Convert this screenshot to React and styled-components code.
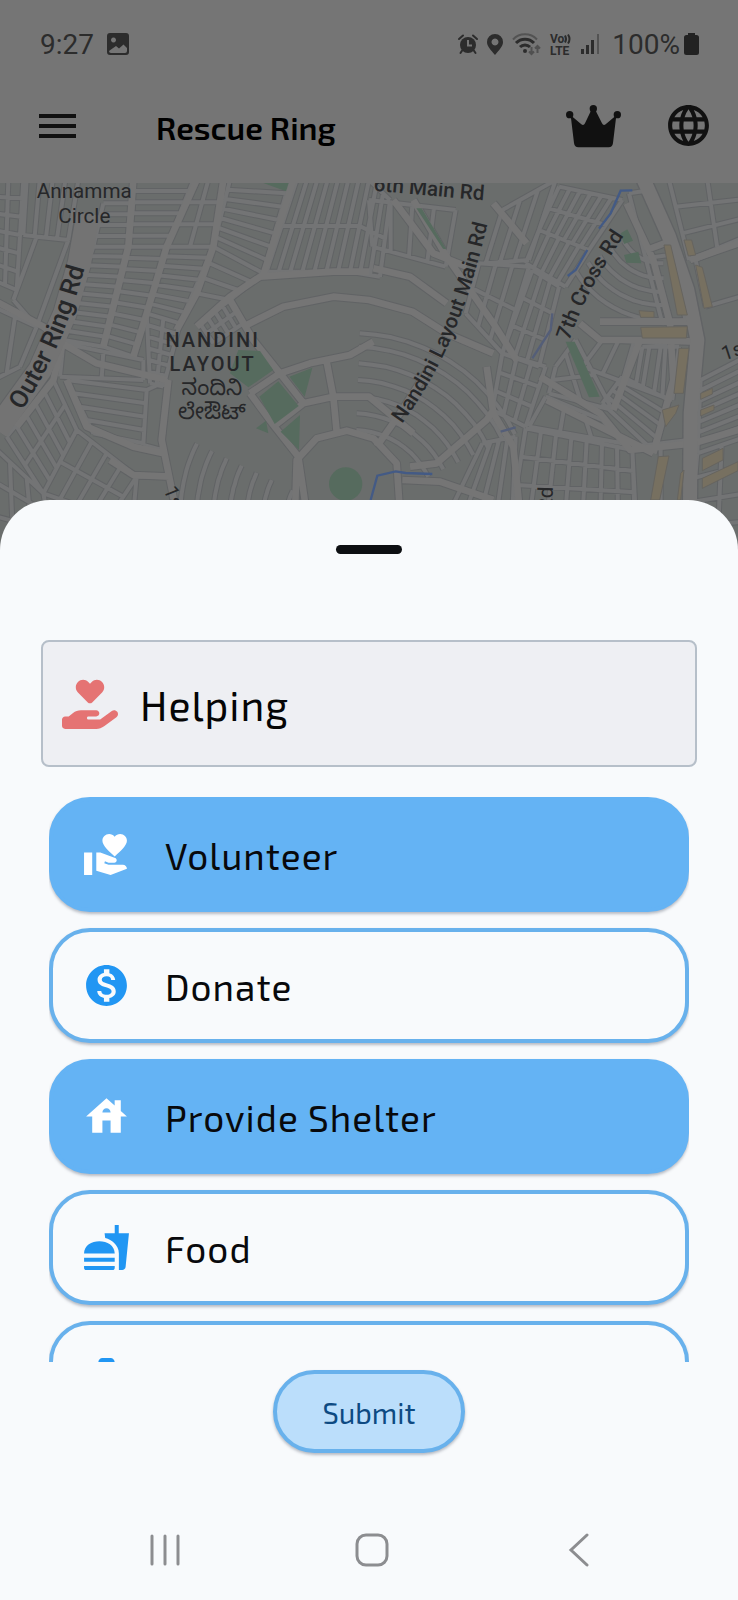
import React, { useState } from "react";
import styled, { createGlobalStyle } from "styled-components";
import {
  MdVolunteerActivism,
  MdMonetizationOn,
  MdHouse,
  MdFastfood,
  MdMedicalServices,
  MdLanguage,
} from "react-icons/md";
import { FaHandHoldingHeart } from "react-icons/fa6";

const GlobalStyle = createGlobalStyle`
  *, *::before, *::after { box-sizing: border-box; }
  body {
    margin: 0;
    background: #757575;
    font-family: "Exo 2", "Noto Sans", "Open Sans", sans-serif;
  }
  button { font: inherit; cursor: pointer; }
`;

const Screen = styled.div`
  display: flex;
  flex-direction: column;
  height: 100vh;
  min-height: 1200px;
`;

const StatusBar = styled.div`
  flex: none;
  display: flex;
  align-items: center;
  justify-content: space-between;
  height: 88px;
  padding: 0 39px 0 40px;
  color: #2c2c2c;
  font-family: Roboto, sans-serif;
  font-size: 28px;
`;

const StatusGroup = styled.div`
  display: flex;
  align-items: center;
  gap: ${(p) => p.$gap}px;

  svg { overflow: visible; }
`;

const StatusText = styled.span`
  font-weight: 400;
`;

const BatteryGroup = styled.span`
  display: flex;
  align-items: center;
  gap: 4px;
`;

const AppBar = styled.header`
  flex: none;
  display: flex;
  align-items: center;
  height: 95px;
  padding: 0 25px 20px 37px;
  color: #111111;
`;

const IconButton = styled.button`
  display: flex;
  padding: 0;
  border: 0;
  background: none;
  color: inherit;
`;

const Title = styled.h1`
  flex: 1;
  margin: 0 0 0 78px;
  padding-top: 2px;
  color: #000;
  font-size: 32px;
  font-weight: 600;
  line-height: 40px;
`;

const Actions = styled.div`
  display: flex;
  align-items: center;
  gap: 43px;
`;

const MapArea = styled.div`
  flex: none;
  height: 363px;
  margin-bottom: -46px;
  background: #686b6a;

  svg {
    display: block;
    width: 100%;
    height: 100%;
  }
`;

const Sheet = styled.main`
  position: relative;
  flex: 1;
  min-height: 0;
  display: flex;
  flex-direction: column;
  align-items: center;
  padding-top: 45px;
  border-radius: 50px 50px 0 0;
  background: #f8fafc;
`;

const Handle = styled.div`
  flex: none;
  width: 66px;
  height: 9px;
  border-radius: 5px;
  background: #0d0f12;
`;

const Category = styled.div`
  flex: none;
  align-self: stretch;
  display: flex;
  align-items: center;
  gap: 22px;
  height: 127px;
  margin: 86px 41px 0;
  padding: 0 19px;
  border: 2px solid #b6bfc9;
  border-radius: 8px;
  background: #eeeff3;
  color: #e57373;
`;

const CategoryName = styled.h2`
  margin: 0;
  padding-top: 2px;
  color: #050505;
  font-size: 41px;
  font-weight: 400;
  line-height: 56px;
  letter-spacing: 1px;
`;

const OptionList = styled.div`
  flex: 1 1 0;
  min-height: 0;
  align-self: stretch;
  display: flex;
  flex-direction: column;
  gap: 16px;
  margin: 30px 49px 8px;
  overflow: hidden;
`;

const OptionButton = styled.button`
  flex: none;
  display: flex;
  align-items: center;
  gap: 34px;
  height: 115px;
  padding: 0 29px;
  border: 4px solid ${(p) => (p.$on ? "#64b3f4" : "#68b1ec")};
  border-radius: 41px;
  background: ${(p) => (p.$on ? "#64b3f4" : "#f8fafc")};
  box-shadow: 0 2px 3px rgba(60, 70, 90, 0.35);
  color: ${(p) => (p.$on ? "#fff" : "#2196f3")};
  text-align: left;
`;

const OptionLabel = styled.span`
  color: #08090c;
  font-size: 37px;
  line-height: 48px;
  letter-spacing: 1px;
`;

const SubmitButton = styled.button`
  flex: none;
  width: 192px;
  height: 83px;
  padding: 2px 0 0;
  border: 4px solid #68b1ec;
  border-radius: 42px;
  background: #bbdefb;
  box-shadow: 0 2px 3px rgba(60, 70, 90, 0.35);
  color: #0d4a82;
  font-size: 29px;
  line-height: 40px;
`;

const SystemNav = styled.nav`
  flex: none;
  align-self: stretch;
  display: flex;
  align-items: center;
  justify-content: space-between;
  height: 100px;
  margin-top: 47px;
  padding: 0 142px 0 148px;
  color: #8c8d90;
`;

/* Street map, drawn in units of a third of a pixel. */

const mix = (a, b, t) => [a[0] + (b[0] - a[0]) * t, a[1] + (b[1] - a[1]) * t];
const right = (pts) => pts.map(([x, y]) => [x + 1107, y]);
const toPath = (pts, close) =>
  "M" + pts.map((p) => p.map(Math.round).join(" ")).join("L") + (close ? "Z" : "");

function gridPath([a, b, c, d], across, down) {
  let out = "";
  for (let i = 0; i <= across; i++) {
    out += toPath([mix(a, b, i / across), mix(d, c, i / across)]);
  }
  for (let j = 0; j <= down; j++) {
    out += toPath([mix(a, d, j / down), mix(b, c, j / down)]);
  }
  return out;
}

function arcPath(cx, cy, r, from, to) {
  const pts = [];
  for (let k = 0; k <= 12; k++) {
    const t = ((from + ((to - from) * k) / 12) * Math.PI) / 180;
    pts.push([cx + r * Math.cos(t), cy + r * Math.sin(t)]);
  }
  return toPath(pts);
}

const L = (q, m, n) => gridPath(q, m, n);
const R = (q, m, n) => gridPath(right(q), m, n);

const lanes = [
  L([[-20, 0], [70, 0], [50, 330], [-20, 300]], 2, 6),
  L([[80, 0], [235, 0], [205, 180], [70, 165]], 4, 1),
  L([[110, 170], [205, 180], [110, 440], [40, 360]], 1, 1),
  L([[400, 0], [580, 0], [500, 200], [385, 200]], 1, 6),
  L([[385, 200], [500, 200], [400, 530], [310, 500]], 1, 9),
  L([[310, 70], [400, 70], [385, 200], [280, 200]], 1, 4),
  L([[280, 200], [385, 200], [310, 500], [190, 480]], 1, 10),
  L([[580, 0], [670, 0], [640, 200], [500, 200]], 2, 3),
  L([[500, 200], [640, 200], [540, 430], [440, 400]], 1, 7),
  L([[440, 400], [540, 430], [490, 620], [450, 610]], 2, 6),
  L([[690, 0], [870, 0], [790, 280], [640, 200]], 1, 7),
  L([[640, 200], [790, 280], [690, 360], [590, 340]], 1, 3),
  L([[600, 430], [690, 360], [730, 430], [640, 490]], 4, 2),
  L([[890, 0], [1107, 0], [1050, 275], [800, 275]], 7, 2),
  L([[1107, 0], [1170, 60], [1140, 290], [1050, 275]], 3, 2),
  L([[190, 490], [430, 540], [430, 600], [180, 590]], 2, 1),
  L([[200, 600], [440, 630], [430, 790], [280, 760]], 1, 4),
  L([[440, 630], [505, 600], [485, 810], [430, 795]], 1, 1),
  L([[160, 600], [230, 750], [130, 940], [20, 770]], 2, 5),
  L([[230, 750], [410, 890], [330, 1010], [130, 940]], 4, 2),
  L([[-20, 800], [130, 940], [160, 1110], [-20, 1110]], 3, 3),
  L([[-20, 380], [110, 440], [60, 560], [-20, 600]], 2, 1),
  L([[410, 890], [510, 890], [520, 1000], [400, 1000]], 1, 1),
  R([[0, 60], [260, 90], [230, 260], [10, 200]], 4, 1),
  R([[400, 90], [560, 0], [480, 240], [350, 250]], 3, 1),
  R([[570, 20], [760, 60], [660, 210], [510, 150]], 6, 2),
  R([[510, 150], [660, 210], [590, 320], [470, 250]], 5, 1),
  R([[330, 250], [480, 260], [400, 520], [290, 400]], 3, 2),
  R([[490, 270], [570, 320], [510, 560], [400, 520]], 3, 3),
  R([[400, 520], [530, 560], [470, 740], [370, 690]], 3, 3),
  R([[560, 560], [620, 480], [730, 690], [540, 640]], 2, 2),
  R([[700, 480], [890, 490], [880, 650], [640, 560]], 4, 1),
  R([[760, 590], [900, 660], [850, 810], [700, 670]], 1, 4),
  R([[530, 650], [700, 720], [760, 790], [480, 740]], 3, 1),
  R([[470, 745], [790, 810], [800, 1000], [430, 1000]], 7, 3),
  R([[340, 790], [440, 770], [430, 1000], [240, 1000]], 4, 1),
  R([[780, 40], [850, 30], [950, 420], [880, 430]], 1, 2),
  R([[900, 0], [1130, 0], [1130, 170], [960, 240]], 2, 3),
  R([[980, 240], [1130, 180], [1130, 345], [1010, 380]], 1, 1),
  R([[995, 600], [1130, 530], [1130, 770], [985, 820]], 1, 7),
  R([[985, 820], [1130, 770], [1130, 1110], [960, 1110]], 2, 4),
  R([[820, 500], [930, 500], [910, 660], [800, 620]], 2, 1),
  R([[790, 800], [960, 780], [950, 1110], [800, 1110]], 2, 1),
  ...[180, 250, 300, 350, 400, 450, 500].map((r) => arcPath(1040, 1010, r, 182, 206)),
  ...[250, 300, 350, 400, 450, 500, 540].map((r) => arcPath(1060, 1000, r, 272, 334)),
  ...[130, 175, 215, 255, 300].map((r) => arcPath(1985, 120, r, 88, 150)),
].join("");

const streets = [
  toPath([[-20, 360], [130, 440], [190, 480], [160, 600], [50, 740]]),
  toPath([[400, 0], [385, 200], [310, 500]]),
  toPath([[590, 0], [500, 200], [440, 400], [400, 530]]),
  toPath([[670, 0], [640, 200], [590, 340], [530, 450]]),
  toPath([[880, 0], [790, 285]]),
  toPath([[590, 440], [690, 350], [780, 290], [1000, 275], [1107, 275]]),
  toPath([[690, 360], [760, 480], [840, 580], [915, 675]]),
  toPath([[730, 440], [850, 380], [1000, 350], [1107, 360], [1237, 395], [1340, 460], [1480, 520]]),
  toPath([[750, 640], [840, 580], [930, 550], [1050, 525], [1120, 485]]),
  toPath([[820, 740], [910, 670], [1000, 650], [1107, 650], [1240, 760]]),
  toPath([[750, 640], [820, 735], [895, 830], [920, 1000]]),
  toPath([[885, 1000], [890, 840], [950, 775], [1040, 752], [1120, 775], [1190, 850], [1200, 1000]]),
  toPath([[980, 545], [1000, 650], [1010, 755]]),
  toPath([[170, 480], [290, 550], [500, 600]]),
  toPath([[200, 600], [260, 740], [400, 800], [490, 820]]),
  toPath([[505, 600], [485, 780], [530, 1000]]),
  toPath([[330, 840], [400, 885], [510, 890]]),
  toPath([[1120, 265], [1230, 290], [1340, 370]]),
  toPath([[1240, 60], [1340, 230], [1480, 430], [1550, 540]]),
  toPath([[1180, 60], [1300, 220], [1400, 260]]),
  toPath([[1480, 70], [1580, 190]]),
  toPath([[1130, 800], [1200, 700], [1290, 560]]),
  toPath([[1230, 860], [1310, 850], [1460, 720], [1480, 690]]),
  toPath([[1460, 560], [1480, 700], [1540, 800], [1560, 1000]]),
  toPath([[1207, 900], [1320, 905], [1480, 960]]),
  toPath([[1620, 590], [1800, 700], [1890, 810], [2080, 790], [2230, 745]]),
  toPath([[1640, 660], [1840, 760], [1960, 820]]),
  toPath([[1840, 690], [1920, 480], [2090, 485]]),
  toPath([[1740, 430], [1800, 480], [1920, 480]]),
  toPath([[1800, 425], [2070, 425]]),
  toPath([[2070, 240], [2230, 185]]),
  toPath([[1940, 210], [2020, 180]]),
  toPath([[1880, 70], [1960, 240], [2010, 430], [2020, 600], [1960, 820]]),
].join("");

const avenue = toPath(right([[820, -10], [900, 170], [955, 330], [985, 480], [965, 700], [962, 1110]]));
const ringRoad = toPath([[265, 100], [238, 250], [195, 400], [120, 570], [-10, 750]]);

const yellow = [
  right([[885, 195], [905, 195], [955, 405], [925, 405]]),
  right([[815, 442], [955, 440], [952, 474], [820, 474]]),
  right([[930, 505], [960, 505], [943, 640], [915, 640]]),
  right([[980, 255], [1000, 262], [1030, 380], [1005, 385]]),
  right([[945, 180], [968, 180], [980, 225], [958, 228]]),
  right([[810, 392], [855, 395], [855, 412], [815, 412]]),
  right([[880, 690], [930, 675], [920, 700], [890, 740]]),
  right([[868, 830], [900, 828], [872, 960], [845, 960]]),
  right([[1000, 835], [1062, 805], [1062, 840], [1000, 872]]),
  right([[1000, 895], [1107, 845], [1107, 872], [1000, 925]]),
  right([[935, 880], [945, 870], [935, 960], [925, 960]]),
  right([[995, 640], [1030, 625], [1030, 642], [995, 658]]),
  right([[995, 690], [1035, 675], [1035, 690], [995, 708]]),
];

const green = [
  [[715, 510], [780, 513], [820, 570], [745, 622], [690, 580]],
  [[868, 590], [937, 563], [914, 650]],
  [[778, 650], [835, 604], [896, 678], [824, 732]],
  [[842, 755], [900, 705], [897, 810]],
  [[768, 745], [798, 722], [805, 760]],
  [[790, 9], [866, 9], [858, 34]],
  right([[590, 485], [617, 485], [692, 650], [660, 652]]),
  right([[755, 160], [775, 148], [792, 182], [765, 192]]),
  right([[765, 225], [808, 215], [817, 250], [772, 248]]),
  right([[142, 85], [158, 85], [232, 208], [222, 206]]),
];

const water = [
  right([[790, 31], [755, 32], [725, 100], [690, 146]]),
  right([[655, 210], [620, 270], [596, 288]]),
  right([[5, 960], [25, 887], [80, 874], [110, 879], [190, 882]]),
].map((p) => toPath(p)).join("");

const faintWater = [
  right([[550, 400], [545, 450], [490, 535]]),
  right([[395, 755], [440, 742]]),
].map((p) => toPath(p)).join("");

const MapText = styled.text`
  font-family: Roboto, "Noto Sans Kannada", sans-serif;
  font-size: ${(p) => p.$size}px;
  font-weight: ${(p) => (p.$medium ? 500 : 400)};
  letter-spacing: ${(p) => (p.$district ? "6px" : "normal")};
  fill: #262729;
  text-anchor: ${(p) => (p.$start ? "start" : "middle")};
`;

function StreetMap() {
  return (
    <MapArea>
      <svg viewBox="0 9 2214 1089" preserveAspectRatio="xMidYMin slice" role="img" aria-label="Map of Nandini Layout">
        <defs>
          <path id="ring" d="M68 692C126 590 190 500 258 250" />
          <path id="mainRd" d="M1206 732C1330 560 1400 400 1468 110" />
          <path id="crossRd" d="M1708 482C1742 380 1790 290 1880 155" />
        </defs>
        <rect x="0" y="0" width="2214" height="1100" fill="#6a6d6c" />
        <circle cx="1037" cy="912" r="50" fill="#566b5e" />
        <g fill="none" strokeLinejoin="round">
          <path d={lanes} stroke="#616365" strokeWidth="18" />
          <path d={streets} stroke="#616365" strokeWidth="26" />
          <path d={avenue} stroke="#616365" strokeWidth="50" />
          <path d={ringRoad} stroke="#616365" strokeWidth="76" />
          <path d={lanes} stroke="#737475" strokeWidth="12" />
          <path d={streets} stroke="#757575" strokeWidth="20" />
          <path d={avenue} stroke="#757575" strokeWidth="42" />
          <path d={ringRoad} stroke="#737373" strokeWidth="70" />
        </g>
        {green.map((p, i) => (
          <path key={i} d={toPath(p, true)} fill="#566b5e" />
        ))}
        {yellow.map((p, i) => (
          <path key={i} d={toPath(p, true)} fill="#777060" stroke="#66645f" strokeWidth="3" />
        ))}
        <path d={water} fill="none" stroke="#435a85" strokeWidth="7" />
        <path d={faintWater} fill="none" stroke="#545e78" strokeWidth="7" />
        <MapText $size={62} x="253" y="54">Annamma</MapText>
        <MapText $size={62} x="253" y="129">Circle</MapText>
        <MapText $size={60} $medium $district x="638" y="500">NANDINI</MapText>
        <MapText $size={60} $medium $district x="638" y="574">LAYOUT</MapText>
        <MapText $size={66} x="636" y="644">ನಂದಿನಿ</MapText>
        <MapText $size={66} x="636" y="716">ಲೇಔಟ್</MapText>
        <MapText $size={76} $medium $start><textPath href="#ring">Outer Ring Rd</textPath></MapText>
        <MapText $size={62} $medium $start><textPath href="#mainRd">Nandini Layout Main Rd</textPath></MapText>
        <MapText $size={62} $medium $start><textPath href="#crossRd">7th Cross Rd</textPath></MapText>
        <MapText $size={62} $medium $start transform="translate(1120 32) rotate(5)">6th Main Rd</MapText>
        <MapText $size={62} $start transform="translate(1656 994) rotate(-88)">Rd</MapText>
        <MapText $size={60} $start transform="translate(2172 542) rotate(-18)">1st</MapText>
        <MapText $size={60} $start transform="translate(490 928) rotate(68)">1st</MapText>
      </svg>
    </MapArea>
  );
}

function CrownIcon() {
  return (
    <svg width="55" height="44" viewBox="0 0 165 132" fill="currentColor" aria-hidden="true">
      <circle cx="11" cy="32" r="11" />
      <circle cx="82" cy="14" r="11" />
      <circle cx="154" cy="32" r="11" />
      <path d="M14 34 46 61Q53 66 57 58L76 18H88L108 58Q112 66 119 61L151 34 141 117Q139 130 128 130H37Q26 130 24 117Z" />
    </svg>
  );
}

function PictureIcon() {
  return (
    <svg width="22" height="22" viewBox="0 0 22 22" aria-hidden="true">
      <path fillRule="evenodd" fill="currentColor" d="M3 0h16a3 3 0 0 1 3 3v16a3 3 0 0 1-3 3H3a3 3 0 0 1-3-3V3a3 3 0 0 1 3-3Zm3.500 4.500a2.500 2.500 0 1 0 .01 0ZM2 18a2 2 0 0 0 2 2h14a2 2 0 0 0 2-2v-3l-3.500-3.500-4.500 4-3-2.500-5 3.500Z" />
    </svg>
  );
}

function AlarmIcon() {
  return (
    <svg width="20" height="20" viewBox="0 0 20 20" fill="none" stroke="currentColor" aria-hidden="true">
      <circle cx="10" cy="11" r="8" fill="currentColor" stroke="none" />
      <path d="M1 5 5 1.500M19 5l-4-3.500M4.500 16 2.500 19M15.500 16l2 3" strokeWidth="2" strokeLinecap="round" />
      <path d="M10 6v5.500h4" stroke="#757575" strokeWidth="2" />
    </svg>
  );
}

function PinIcon() {
  return (
    <svg width="16" height="21" viewBox="0 0 16 21" aria-hidden="true">
      <path fillRule="evenodd" fill="currentColor" d="M8 0a8 8 0 0 1 8 8c0 4.500-4 8-8 13C4 16 0 12.500 0 8a8 8 0 0 1 8-8Zm0 4.500a3.500 3.500 0 1 0 .01 0Z" />
    </svg>
  );
}

function WifiIcon() {
  return (
    <svg width="29" height="23" viewBox="0 0 29 23" fill="none" stroke="currentColor" strokeWidth="2" aria-hidden="true">
      <path d="M1 6.500a16.500 16.500 0 0 1 24 0" stroke="#535353" />
      <path d="M4 10a12.500 12.500 0 0 1 18 0M8 14a7 7 0 0 1 10 0" strokeWidth="3" />
      <circle cx="13" cy="18" r="2" fill="currentColor" stroke="none" />
      <path d="M19.500 14v7m-2.500-2.500 2.500 2.500 2.500-2.500M25.500 20v-7m-2.500 2.500 2.500-2.500 2.500 2.500" stroke="#505050" />
    </svg>
  );
}

function VolteIcon() {
  return (
    <svg width="22" height="23" viewBox="0 0 22 23" fill="currentColor" fontFamily="Roboto, sans-serif" fontWeight="700" role="img" aria-label="VoLTE">
      <text x="0" y="10" fontSize="12">Vo</text>
      <path d="M15 2.500q2 3.500 0 7M18 1.500q3 4.500 0 9" fill="none" stroke="currentColor" strokeWidth="2" />
      <text x="0" y="22" fontSize="12">LTE</text>
    </svg>
  );
}

function SignalIcon() {
  return (
    <svg width="22" height="20" viewBox="0 0 22 20" aria-hidden="true">
      <path fill="currentColor" d="M0 15h3v5H0ZM5 11h3v9H5ZM10 6h3v14h-3Z" />
      <path fill="#535353" d="M16 0h2v20h-2Z" />
    </svg>
  );
}

function BatteryIcon() {
  return (
    <svg width="15" height="22" viewBox="0 0 15 22" fill="#222" aria-hidden="true">
      <path d="M4 0h7v2h1.500A2.500 2.500 0 0 1 15 4.500v15a2.500 2.500 0 0 1-2.500 2.500h-10A2.500 2.500 0 0 1 0 19.500v-15A2.500 2.500 0 0 1 2.500 2H4Z" />
    </svg>
  );
}

const OPTIONS = [
  { name: "Volunteer", Icon: MdVolunteerActivism },
  { name: "Donate", Icon: MdMonetizationOn },
  { name: "Provide Shelter", Icon: MdHouse },
  { name: "Food", Icon: MdFastfood },
  { name: "Medical", Icon: MdMedicalServices },
];

export default function App() {
  const [selected, setSelected] = useState(["Volunteer", "Provide Shelter"]);
  const toggle = (name) =>
    setSelected((s) => (s.includes(name) ? s.filter((n) => n !== name) : [...s, name]));

  return (
    <Screen>
      <GlobalStyle />
      <StatusBar>
        <StatusGroup $gap={13}>
          <StatusText>9:27</StatusText>
          <PictureIcon />
        </StatusGroup>
        <StatusGroup $gap={9}>
          <AlarmIcon />
          <PinIcon />
          <WifiIcon />
          <VolteIcon />
          <SignalIcon />
          <BatteryGroup>
            <StatusText>100%</StatusText>
            <BatteryIcon />
          </BatteryGroup>
        </StatusGroup>
      </StatusBar>

      <AppBar>
        <IconButton aria-label="Menu">
          <svg width="41" height="26" viewBox="0 0 41 26" fill="currentColor">
            <path d="M2 1h37v4H2ZM2 11h37v4H2ZM2 21h37v4H2Z" />
          </svg>
        </IconButton>
        <Title>Rescue Ring</Title>
        <Actions>
          <IconButton aria-label="Premium"><CrownIcon /></IconButton>
          <IconButton aria-label="Language"><MdLanguage size={49} /></IconButton>
        </Actions>
      </AppBar>

      <StreetMap />

      <Sheet>
        <Handle />
        <Category>
          <FaHandHoldingHeart size={56} />
          <CategoryName>Helping</CategoryName>
        </Category>
        <OptionList>
          {OPTIONS.map(({ name, Icon }) => {
            const on = selected.includes(name);
            return (
              <OptionButton key={name} $on={on} aria-pressed={on} onClick={() => toggle(name)}>
                <Icon size={49} />
                <OptionLabel>{name}</OptionLabel>
              </OptionButton>
            );
          })}
        </OptionList>
        <SubmitButton>Submit</SubmitButton>
        <SystemNav>
          <IconButton aria-label="Recent apps">
            <svg width="34" height="34" viewBox="0 0 34 34" stroke="currentColor" strokeWidth="3" strokeLinecap="round">
              <path d="M4 3v28M17 3v28M30 3v28" />
            </svg>
          </IconButton>
          <IconButton aria-label="Home">
            <svg width="34" height="34" viewBox="0 0 34 34" fill="none" stroke="currentColor" strokeWidth="3">
              <rect x="2" y="2" width="30" height="30" rx="9" />
            </svg>
          </IconButton>
          <IconButton aria-label="Back">
            <svg width="34" height="34" viewBox="0 0 34 34" fill="none" stroke="currentColor" strokeWidth="3" strokeLinecap="round">
              <path d="M25 2 9 17l16 15" />
            </svg>
          </IconButton>
        </SystemNav>
      </Sheet>
    </Screen>
  );
}
